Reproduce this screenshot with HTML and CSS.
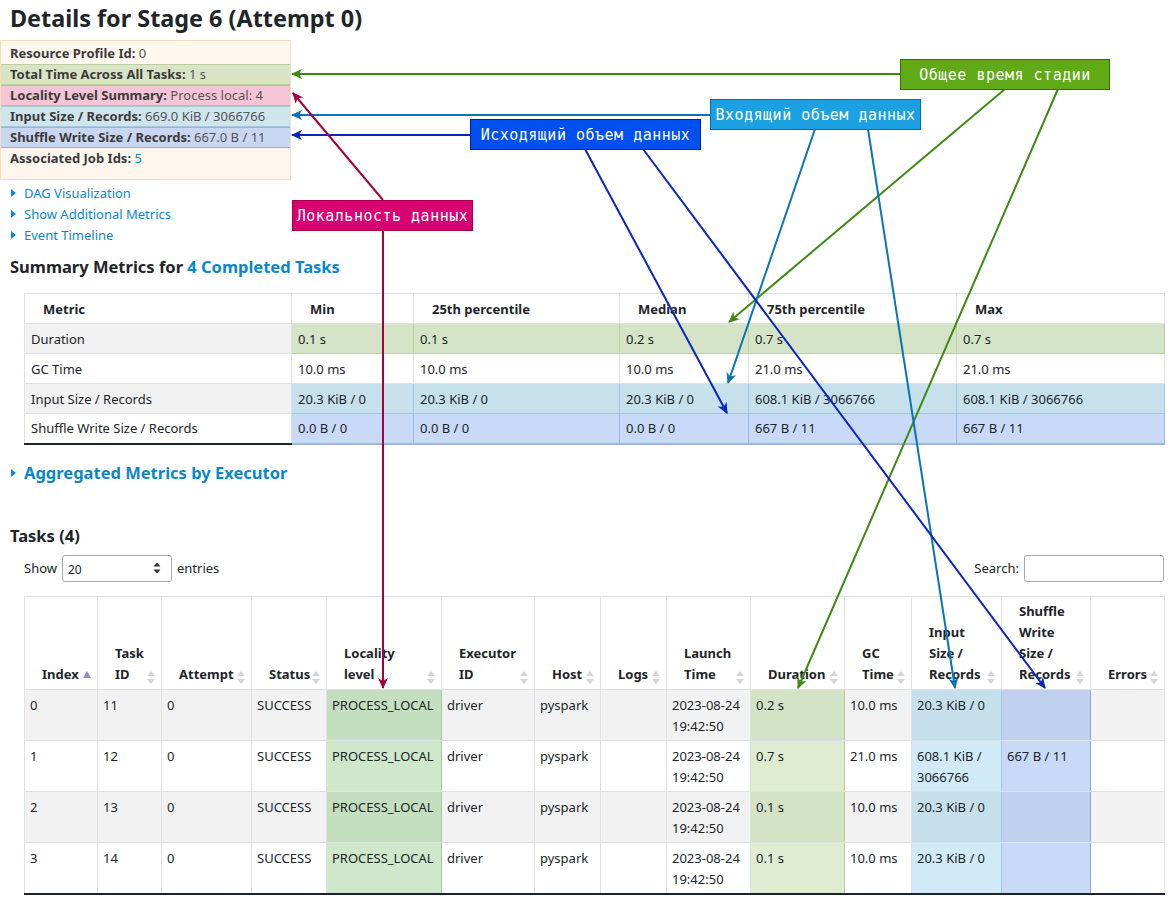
FILE: index.html
```html
<!DOCTYPE html>
<html lang="en">
<head>
<meta charset="utf-8">
<title>Details for Stage 6 (Attempt 0)</title>
<link rel="stylesheet" href="styles.css">
</head>
<body>
<div class="page">
  <h3 class="title">Details for Stage 6 (Attempt 0)</h3>

  <ul class="info">
    <li class="info-row"><strong>Resource Profile Id:</strong> <span class="val">0</span></li>
    <li class="info-row hl-green"><strong>Total Time Across All Tasks:</strong> <span class="val">1 s</span></li>
    <li class="info-row hl-pink"><strong>Locality Level Summary:</strong> <span class="val">Process local: 4</span></li>
    <li class="info-row hl-cyan"><strong>Input Size / Records:</strong> <span class="val">669.0 KiB / 3066766</span></li>
    <li class="info-row hl-blue"><strong>Shuffle Write Size / Records:</strong> <span class="val">667.0 B / 11</span></li>
    <li class="info-row"><strong>Associated Job Ids:</strong> <a href="#">5</a></li>
  </ul>

  <ul class="toggles">
    <li><span class="caret"></span><a href="#">DAG Visualization</a></li>
    <li><span class="caret"></span><a href="#">Show Additional Metrics</a></li>
    <li><span class="caret"></span><a href="#">Event Timeline</a></li>
  </ul>

  <h4 class="section summary-title">Summary Metrics for <a href="#">4 Completed Tasks</a></h4>

  <table class="summary">
    <colgroup>
      <col style="width:267px"><col style="width:122px"><col style="width:206px"><col style="width:129px"><col style="width:208px"><col style="width:208px">
    </colgroup>
    <thead>
      <tr><th>Metric</th><th>Min</th><th>25th percentile</th><th>Median</th><th>75th percentile</th><th>Max</th></tr>
    </thead>
    <tbody>
      <tr class="r-dur"><td class="name">Duration</td><td>0.1 s</td><td>0.1 s</td><td>0.2 s</td><td>0.7 s</td><td>0.7 s</td></tr>
      <tr class="r-gc"><td class="name">GC Time</td><td>10.0 ms</td><td>10.0 ms</td><td>10.0 ms</td><td>21.0 ms</td><td>21.0 ms</td></tr>
      <tr class="r-in"><td class="name">Input Size / Records</td><td>20.3 KiB / 0</td><td>20.3 KiB / 0</td><td>20.3 KiB / 0</td><td>608.1 KiB / 3066766</td><td>608.1 KiB / 3066766</td></tr>
      <tr class="r-sh"><td class="name">Shuffle Write Size / Records</td><td>0.0 B / 0</td><td>0.0 B / 0</td><td>0.0 B / 0</td><td>667 B / 11</td><td>667 B / 11</td></tr>
    </tbody>
  </table>

  <h4 class="section agg-title"><span class="caret"></span><a href="#">Aggregated Metrics by Executor</a></h4>

  <h4 class="section tasks-title">Tasks (4)</h4>

  <div class="controls">
    <div class="length">
      <span>Show</span>
      <span class="select"><span class="select-val">20</span>
        <svg class="select-icon" width="8" height="12" viewBox="0 0 8 12"><path d="M4 0.5 L7.5 4.5 L0.5 4.5 Z M4 11.5 L7.5 7.5 L0.5 7.5 Z" fill="#333"/></svg>
      </span>
      <span>entries</span>
    </div>
    <div class="search">
      <span>Search:</span>
      <input class="search-input" type="text" aria-label="Search">
    </div>
  </div>

  <table class="tasks">
    <colgroup>
      <col style="width:73px"><col style="width:64px"><col style="width:90px"><col style="width:75px"><col style="width:115px"><col style="width:93px"><col style="width:66px"><col style="width:66px"><col style="width:84px"><col style="width:94px"><col style="width:67px"><col style="width:90px"><col style="width:89px"><col style="width:74px">
    </colgroup>
    <thead>
      <tr>
        <th>Index<span class="asc"></span></th>
        <th>Task<br>ID<span class="sort"></span></th>
        <th>Attempt<span class="sort"></span></th>
        <th>Status<span class="sort"></span></th>
        <th>Locality<br>level<span class="sort"></span></th>
        <th>Executor<br>ID<span class="sort"></span></th>
        <th>Host<span class="sort"></span></th>
        <th>Logs<span class="sort"></span></th>
        <th>Launch<br>Time<span class="sort"></span></th>
        <th>Duration<span class="sort"></span></th>
        <th>GC<br>Time<span class="sort"></span></th>
        <th>Input<br>Size /<br>Records<span class="sort"></span></th>
        <th>Shuffle<br>Write<br>Size /<br>Records<span class="sort"></span></th>
        <th>Errors<span class="sort"></span></th>
      </tr>
    </thead>
    <tbody>
      <tr>
        <td>0</td><td>11</td><td>0</td><td>SUCCESS</td><td class="c-loc">PROCESS_LOCAL</td><td>driver</td><td>pyspark</td><td></td>
        <td>2023-08-24<br>19:42:50</td><td class="c-dur">0.2 s</td><td>10.0 ms</td><td class="c-in">20.3 KiB / 0</td><td class="c-sh"></td><td></td>
      </tr>
      <tr>
        <td>1</td><td>12</td><td>0</td><td>SUCCESS</td><td class="c-loc">PROCESS_LOCAL</td><td>driver</td><td>pyspark</td><td></td>
        <td>2023-08-24<br>19:42:50</td><td class="c-dur">0.7 s</td><td>21.0 ms</td><td class="c-in">608.1 KiB /<br>3066766</td><td class="c-sh">667 B / 11</td><td></td>
      </tr>
      <tr>
        <td>2</td><td>13</td><td>0</td><td>SUCCESS</td><td class="c-loc">PROCESS_LOCAL</td><td>driver</td><td>pyspark</td><td></td>
        <td>2023-08-24<br>19:42:50</td><td class="c-dur">0.1 s</td><td>10.0 ms</td><td class="c-in">20.3 KiB / 0</td><td class="c-sh"></td><td></td>
      </tr>
      <tr>
        <td>3</td><td>14</td><td>0</td><td>SUCCESS</td><td class="c-loc">PROCESS_LOCAL</td><td>driver</td><td>pyspark</td><td></td>
        <td>2023-08-24<br>19:42:50</td><td class="c-dur">0.1 s</td><td>10.0 ms</td><td class="c-in">20.3 KiB / 0</td><td class="c-sh"></td><td></td>
      </tr>
    </tbody>
  </table>

  <svg class="overlay" width="1176" height="904" viewBox="0 0 1176 904">
    <defs>
      <marker id="mg" markerUnits="userSpaceOnUse" markerWidth="12" markerHeight="10" refX="10" refY="5" orient="auto"><path d="M11,5 L0,0 L3,5 L0,10 Z" fill="#3f8a12"/></marker>
      <marker id="mc" markerUnits="userSpaceOnUse" markerWidth="12" markerHeight="10" refX="10" refY="5" orient="auto"><path d="M11,5 L0,0 L3,5 L0,10 Z" fill="#0a74b8"/></marker>
      <marker id="mb" markerUnits="userSpaceOnUse" markerWidth="12" markerHeight="10" refX="10" refY="5" orient="auto"><path d="M11,5 L0,0 L3,5 L0,10 Z" fill="#0a25c0"/></marker>
      <marker id="mr" markerUnits="userSpaceOnUse" markerWidth="12" markerHeight="10" refX="10" refY="5" orient="auto"><path d="M11,5 L0,0 L3,5 L0,10 Z" fill="#a50040"/></marker>
    </defs>
    <g fill="none" stroke-width="2">
      <g stroke="#3f8a12">
        <path d="M900,74 L292,74" marker-end="url(#mg)"/>
        <path d="M1005,89 L729,322" marker-end="url(#mg)"/>
        <path d="M1058,89 L798,688" marker-end="url(#mg)"/>
      </g>
      <g stroke="#0a74b8">
        <path d="M710,115 L292,115" marker-end="url(#mc)"/>
        <path d="M815,129 L728,383" marker-end="url(#mc)"/>
        <path d="M868,129 L955,688" marker-end="url(#mc)"/>
      </g>
      <g stroke="#0a25c0">
        <path d="M470,135 L292,135" marker-end="url(#mb)"/>
        <path d="M585,149 L727,413" marker-end="url(#mb)"/>
        <path d="M643,149 L1045,688" marker-end="url(#mb)"/>
      </g>
      <g stroke="#a50040">
        <path d="M383,200 L293,93" marker-end="url(#mr)"/>
        <path d="M383,230 L383,688" marker-end="url(#mr)"/>
      </g>
    </g>
  </svg>

  <div class="note note-green">Общее время стадии</div>
  <div class="note note-cyan">Входящий объем данных</div>
  <div class="note note-blue">Исходящий объем данных</div>
  <div class="note note-red">Локальность данных</div>
</div>
</body>
</html>
```

FILE: styles.css
```css
* { box-sizing: border-box; }

html, body { margin: 0; padding: 0; background: #fff; }

body {
  font-family: "Noto Sans", "Open Sans", sans-serif;
  font-size: 13px;
  color: #212529;
}

a { color: #0b87cc; text-decoration: none; }

.page {
  position: relative;
  width: 1176px;
  height: 904px;
  overflow: hidden;
}

.title {
  margin: 0;
  padding-left: 10px;
  height: 40px;
  line-height: 36px;
  font-size: 23.4px;
  font-weight: 700;
  color: #212529;
}

/* ---------- info box ---------- */
.info {
  list-style: none;
  margin: 0;
  padding: 2px 0 10px;
  width: 291px;
  background: #fff6ee;
  border: 1px solid #f6e0bc;
}

.info-row {
  height: 21px;
  line-height: 19px;
  padding-left: 9px;
  border-top: 1px solid transparent;
  border-bottom: 1px solid transparent;
  color: #555;
  white-space: nowrap;
}

.info-row strong { color: #3b3b3b; font-weight: 700; }
.info-row .val { color: #555; }

.hl-green { background: #d9e4c6; border-color: #b9cf9d; }
.hl-pink  { background: #f5c5d5; border-color: #e3a4bb; }
.hl-cyan  { background: #cfe4ed; border-color: #a2cade; }
.hl-blue  { background: #c9d6f1; border-color: #98b0e2; }

/* ---------- toggles ---------- */
.toggles {
  list-style: none;
  margin: 2px 0 0;
  padding: 0 0 0 11px;
}

.toggles li {
  display: flex;
  align-items: center;
  height: 21px;
}

.caret {
  display: inline-block;
  width: 0;
  height: 0;
  border-top: 4px solid transparent;
  border-bottom: 4px solid transparent;
  border-left: 5px solid #0b87cc;
  margin-right: 8px;
}

/* ---------- section headings ---------- */
.section {
  margin: 0;
  padding-left: 10px;
  height: 24px;
  line-height: 24px;
  font-size: 16.5px;
  font-weight: 700;
  color: #212529;
}

.summary-title { margin-top: 10px; }

.agg-title {
  margin-top: 16px;
  padding-left: 11px;
  display: flex;
  align-items: center;
}
.agg-title .caret { margin-right: 8px; }

.tasks-title { margin-top: 39px; }

/* ---------- summary table ---------- */
.summary {
  margin: 14px 0 0 24px;
  width: 1140px;
  table-layout: fixed;
  border-collapse: collapse;
}

.summary th {
  height: 30px;
  padding: 0 6px 0 18px;
  text-align: left;
  font-weight: 700;
  border: 1px solid #dee2e6;
}

.summary td {
  height: 30px;
  padding: 0 6px;
  border: 1px solid #dee2e6;
  white-space: nowrap;
}

.summary .r-dur td.name,
.summary .r-in td.name { background: #f2f2f2; }

.summary .r-dur td:not(.name) { background: #d5e3c6; border-color: #b9cf9f; }
.summary .r-in td:not(.name)  { background: #c6e1ec; border-color: #a0c7db; }
.summary .r-sh td:not(.name)  { background: #c9daf8; border-color: #9db4e6; }
.summary .r-sh td { border-bottom: 2px solid #1b2330; }

/* ---------- controls ---------- */
.controls {
  display: flex;
  justify-content: space-between;
  align-items: center;
  height: 27px;
  margin: 7px 12px 14px 24px;
}

.length, .search {
  display: flex;
  align-items: center;
  gap: 5px;
}

.select {
  display: inline-flex;
  align-items: center;
  justify-content: space-between;
  width: 110px;
  height: 27px;
  padding: 0 10px 0 5px;
  border: 1px solid #aaa;
  border-radius: 3px;
  font-size: 12px;
  background: #fff;
}

.select-val { padding-top: 3px; }

.search-input {
  width: 140px;
  height: 27px;
  border: 1px solid #aaa;
  border-radius: 3px;
  margin: 0;
  padding: 0 4px;
  font: inherit;
}

/* ---------- tasks table ---------- */
.tasks {
  margin-left: 24px;
  width: 1140px;
  table-layout: fixed;
  border-collapse: collapse;
}

.tasks th {
  position: relative;
  vertical-align: bottom;
  text-align: left;
  padding: 4px 18px 4px 17px;
  line-height: 21px;
  font-weight: 700;
  white-space: nowrap;
  border: 1px solid #dee2e6;
}

.tasks td {
  height: 50px;
  vertical-align: top;
  padding: 5px 5px 3px;
  line-height: 21px;
  white-space: nowrap;
  border: 1px solid #dee2e6;
  border-top-color: #e3e3e3;
}

.tasks tbody tr:nth-child(odd) td { background: #f2f2f2; }
.tasks tbody tr:last-child td { border-bottom: 2px solid #1b2330; }

.tasks tbody tr:nth-child(odd) td.c-loc  { background: #c4dfc0; }
.tasks tbody tr:nth-child(even) td.c-loc { background: #cfe8cb; }
.tasks td.c-loc { border-left: 1px solid #9fc79c; border-right: 1px solid #9fc79c; border-top-color: #b7d6b3; }

.tasks tbody tr:nth-child(odd) td.c-dur  { background: #d4e2c5; }
.tasks tbody tr:nth-child(even) td.c-dur { background: #dfecd2; }
.tasks td.c-dur { border-left: 1px solid #b3cb98; border-right: 1px solid #b3cb98; border-top-color: #c5d9b0; }

.tasks tbody tr:nth-child(odd) td.c-in  { background: #c5e0ec; }
.tasks tbody tr:nth-child(even) td.c-in { background: #d0ebf7; }
.tasks td.c-in { border-left: 1px solid #9ccbe4; border-right: 1px solid #9ccbe4; border-top-color: #b4d7e8; }

.tasks tbody tr:nth-child(odd) td.c-sh  { background: #c0d1ef; }
.tasks tbody tr:nth-child(even) td.c-sh { background: #c9daf8; }
.tasks td.c-sh { border-left: 1px solid #8aa6e3; border-right: 1px solid #8aa6e3; border-top-color: #a9bfea; }

/* sort indicators */
.sort {
  position: absolute;
  right: 6px;
  bottom: 5px;
  width: 8px;
  height: 13px;
}
.sort::before, .sort::after {
  content: "";
  position: absolute;
  left: 0;
  width: 0;
  height: 0;
  border-left: 4px solid transparent;
  border-right: 4px solid transparent;
}
.sort::before { top: 0; border-bottom: 5px solid #d4d4d4; }
.sort::after  { bottom: 0; border-top: 5px solid #d4d4d4; }

.asc {
  display: inline-block;
  width: 0;
  height: 0;
  margin-left: 4px;
  vertical-align: 1px;
  border-left: 4px solid transparent;
  border-right: 4px solid transparent;
  border-bottom: 7px solid #8b8be0;
}

/* ---------- annotations ---------- */
.overlay {
  position: absolute;
  left: 0;
  top: 0;
  pointer-events: none;
}

.note {
  position: absolute;
  height: 31px;
  display: flex;
  align-items: center;
  justify-content: center;
  color: #fff;
  font-family: "DejaVu Sans Mono", monospace;
  font-size: 15px;
  letter-spacing: 0.5px;
  white-space: nowrap;
  border: 1px solid;
}

.note-green { left: 900px; top: 59px;  width: 210px; background: #60a917; border-color: #2d7600; }
.note-cyan  { left: 710px; top: 99px;  width: 211px; background: #1ba1e2; border-color: #006eaf; }
.note-blue  { left: 470px; top: 119px; width: 231px; background: #0050ef; border-color: #001dbc; }
.note-red   { left: 292px; top: 200px; width: 181px; background: #d80073; border-color: #a50040; }
```
